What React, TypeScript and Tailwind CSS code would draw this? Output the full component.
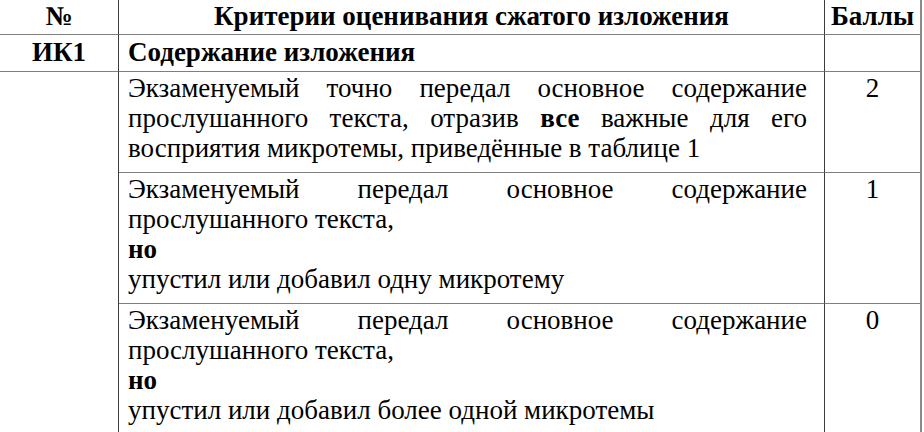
function Spread({ words }: { words: React.ReactNode[] }) {
  return (
    <div className="flex justify-between">
      {words.map((w, i) => (
        <span key={i}>{w}</span>
      ))}
    </div>
  )
}

export default function App() {
  const hb = 'border-b border-b-[#7f7f7f]'
  const lastB = 'border-b-2 border-b-[#8a8a8a]'
  const vr = 'border-r border-r-[#3c3c3c]'
  const rr = 'border-r-2 border-r-[#8a8a8a]'

  const crit = [
    {
      score: '2',
      lines: [
        <Spread key="a" words={['Экзаменуемый', 'точно', 'передал', 'основное', 'содержание']} />,
        <Spread key="b" words={['прослушанного', 'текста,', 'отразив', <b>все</b>, 'важные', 'для', 'его']} />,
        <div key="c">восприятия микротемы, приведённые в таблице 1</div>,
      ],
    },
    {
      score: '1',
      lines: [
        <Spread key="a" words={['Экзаменуемый', 'передал', 'основное', 'содержание']} />,
        <div key="b">прослушанного текста,</div>,
        <div key="c" className="font-bold">но</div>,
        <div key="d">упустил или добавил одну микротему</div>,
      ],
    },
    {
      score: '0',
      lines: [
        <Spread key="a" words={['Экзаменуемый', 'передал', 'основное', 'содержание']} />,
        <div key="b">прослушанного текста,</div>,
        <div key="c" className="font-bold">но</div>,
        <div key="d">упустил или добавил более одной микротемы</div>,
      ],
    },
  ]

  return (
    <div className="font-['Liberation_Serif'] w-[924px] h-[432px] bg-white overflow-hidden">
      <div className="grid grid-cols-[119px_706px_97px] text-[27px] leading-[30px]">
        <div className={`h-[35px] ${hb} ${vr} text-center font-bold pt-[1px]`}>№</div>
        <div className={`h-[35px] ${hb} ${vr} text-center font-bold pt-[1px]`}>
          Критерии оценивания сжатого изложения
        </div>
        <div className={`h-[35px] ${hb} ${rr} text-center font-bold pt-[1px]`}>Баллы</div>

        <div className={`h-[37px] ${hb} ${vr} text-center font-bold pt-[2px]`}>ИК1</div>
        <div className={`h-[37px] ${hb} ${vr} font-bold pl-[9px] pt-[2px]`}>Содержание изложения</div>
        <div className={`h-[37px] ${hb} ${rr}`} />

        <div className={`row-span-3 ${lastB} ${vr}`} />

        {crit.map((r, i) => {
          const b = i === crit.length - 1 ? lastB : hb
          return [
            <div key={`t${i}`} className={`${b} ${vr} pl-[9px] pr-[17px] pt-[1px] pb-[9px]`}>
              {r.lines}
            </div>,
            <div key={`s${i}`} className={`${b} ${rr} text-center pt-[1px]`}>
              {r.score}
            </div>,
          ]
        })}
      </div>
    </div>
  )
}
